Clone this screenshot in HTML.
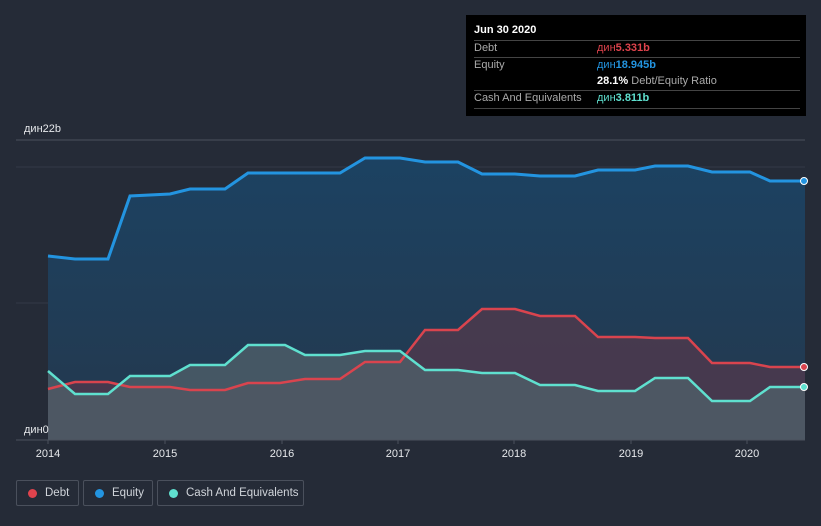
<!DOCTYPE html>
<html><head><meta charset="utf-8"><style>
body{margin:0;width:821px;height:526px;background:#252b37;font-family:"Liberation Sans",sans-serif;overflow:hidden;position:relative}
.tt{position:absolute;left:466px;top:15px;width:340px;height:101px;background:#000;color:#fff;font-size:11px}
.tt .r{position:absolute;left:8px;right:6px;border-top:1px solid #444}
.lg{position:absolute;top:480px;height:26px;border:1px solid #4a505c;border-radius:2px;color:#d0d4da;font-size:11.5px;line-height:25px;box-sizing:border-box;white-space:nowrap}
.lg i{position:absolute;left:11px;top:8px;width:9px;height:9px;border-radius:50%}
</style></head><body>
<svg width="821" height="526" style="position:absolute;left:0;top:0">
<defs><linearGradient id="g" x1="0" y1="0" x2="0" y2="1"><stop offset="0" stop-color="#1c4262"/><stop offset="1" stop-color="#24384d"/></linearGradient></defs>
<line x1="16" y1="140" x2="805" y2="140" stroke="#4a505c"/>
<line x1="16" y1="167" x2="805" y2="167" stroke="#333a47"/>
<line x1="16" y1="303" x2="805" y2="303" stroke="#333a47"/>
<polygon fill="url(#g)" points="48,256 75,259 108,259 130,196 170,194 190,189 225,189 248,173 340,173 365,158 400,158 425,162 458,162 482,174 515,174 540,176 575,176 598,170 635,170 655,166 688,166 712,172 750,172 770,181 805,181 805,440 48,440"/>
<polygon fill="#4a3a4e" opacity="0.9" points="48,389 75,382 108,382 130,387 170,387 190,390 225,390 248,383 280,383 305,379 340,379 365,362 400,362 425,330 458,330 482,309 515,309 540,316 575,316 598,337 635,337 655,338 688,338 712,363 750,363 770,367 805,367 805,440 48,440"/>
<polygon fill="#4f5f69" opacity="0.8" points="48,371 75,394 108,394 130,376 170,376 190,365 225,365 248,345 285,345 305,355 340,355 365,351 400,351 425,370 458,370 482,373 515,373 540,385 575,385 598,391 635,391 655,378 688,378 712,401 750,401 770,387 805,387 805,440 48,440"/>
<polyline fill="none" stroke="#2394e0" stroke-width="3" points="48,256 75,259 108,259 130,196 170,194 190,189 225,189 248,173 340,173 365,158 400,158 425,162 458,162 482,174 515,174 540,176 575,176 598,170 635,170 655,166 688,166 712,172 750,172 770,181 805,181"/>
<polyline fill="none" stroke="#d9444e" stroke-width="2.5" points="48,389 75,382 108,382 130,387 170,387 190,390 225,390 248,383 280,383 305,379 340,379 365,362 400,362 425,330 458,330 482,309 515,309 540,316 575,316 598,337 635,337 655,338 688,338 712,363 750,363 770,367 805,367"/>
<polyline fill="none" stroke="#5fe0cf" stroke-width="2.5" points="48,371 75,394 108,394 130,376 170,376 190,365 225,365 248,345 285,345 305,355 340,355 365,351 400,351 425,370 458,370 482,373 515,373 540,385 575,385 598,391 635,391 655,378 688,378 712,401 750,401 770,387 805,387"/>
<circle cx="804" cy="181" r="3.5" fill="#2394e0" stroke="#fff" stroke-width="1"/>
<circle cx="804" cy="367" r="3.5" fill="#d9444e" stroke="#fff" stroke-width="1"/>
<circle cx="804" cy="387" r="3.5" fill="#5fe0cf" stroke="#fff" stroke-width="1"/>
<line x1="16" y1="440" x2="805" y2="440" stroke="#4a505c"/>
<g stroke="#4a505c"><line x1="48" y1="440" x2="48" y2="444"/><line x1="165" y1="440" x2="165" y2="444"/><line x1="282" y1="440" x2="282" y2="444"/><line x1="398" y1="440" x2="398" y2="444"/><line x1="514" y1="440" x2="514" y2="444"/><line x1="631" y1="440" x2="631" y2="444"/><line x1="747" y1="440" x2="747" y2="444"/></g>
<g fill="#e6e8eb" font-size="11" font-family="Liberation Sans,sans-serif">
<text x="24" y="132">дин22b</text><text x="24" y="433">дин0</text>
<g text-anchor="middle"><text x="48" y="457">2014</text><text x="165" y="457">2015</text><text x="282" y="457">2016</text><text x="398" y="457">2017</text><text x="514" y="457">2018</text><text x="631" y="457">2019</text><text x="747" y="457">2020</text></g>
</g>
</svg>
<div class="tt">
<div style="position:absolute;left:8px;top:9px;font-weight:bold">Jun 30 2020</div>
<div class="r" style="top:25px"></div>
<div style="position:absolute;left:8px;top:27px;color:#aaa">Debt</div><div style="position:absolute;left:131px;top:27px;color:#e0434d">дин<b>5.331b</b></div>
<div class="r" style="top:42px"></div>
<div style="position:absolute;left:8px;top:44px;color:#aaa">Equity</div><div style="position:absolute;left:131px;top:44px;color:#2394e0">дин<b>18.945b</b></div>
<div style="position:absolute;left:131px;top:60px;color:#aaa"><b style="color:#fff">28.1%</b> Debt/Equity Ratio</div>
<div class="r" style="top:75px"></div>
<div style="position:absolute;left:8px;top:77px;color:#aaa">Cash And Equivalents</div><div style="position:absolute;left:131px;top:77px;color:#5fe0cf">дин<b>3.811b</b></div>
<div class="r" style="top:93px"></div>
</div>
<div class="lg" style="left:16px;width:63px"><i style="background:#e0434d"></i><span style="margin-left:28px">Debt</span></div>
<div class="lg" style="left:83px;width:70px"><i style="background:#2394e0"></i><span style="margin-left:28px">Equity</span></div>
<div class="lg" style="left:157px;width:147px"><i style="background:#5fe0cf"></i><span style="margin-left:28px">Cash And Equivalents</span></div>
</body></html>
